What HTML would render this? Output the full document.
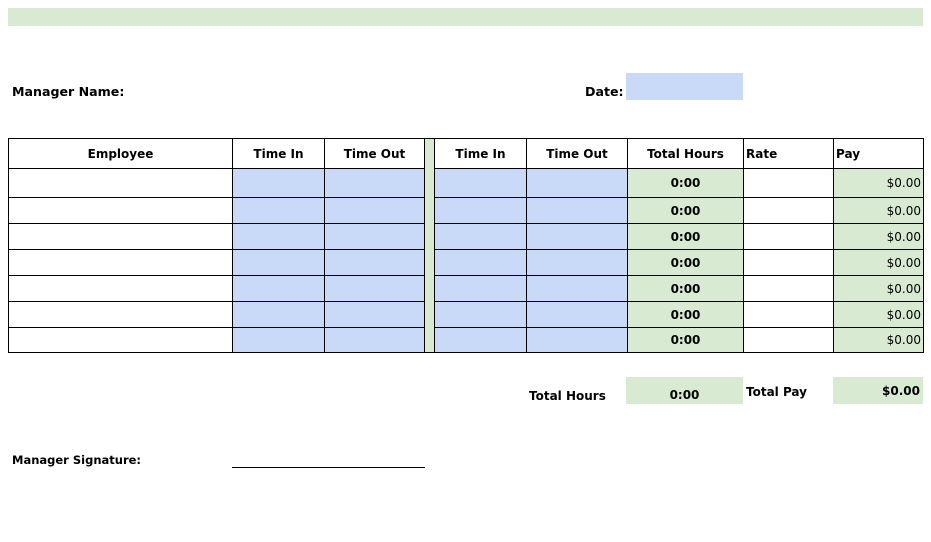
<!DOCTYPE html>
<html><head><meta charset="utf-8"><style>
body{margin:0;width:931px;height:542px;background:#fff;position:relative;font-family:"DejaVu Sans","Liberation Sans",sans-serif;font-size:12px;color:#000;overflow:hidden}
.a{position:absolute}
table{position:absolute;left:8px;top:138px;border-collapse:collapse;table-layout:fixed}
td{border:1px solid #000;padding:0;font-weight:bold;text-align:center;white-space:nowrap;overflow:hidden}
.bl{background:#c9daf8}.gr{background:#d9ead3}
td.r{text-align:right;font-weight:normal;padding-right:2px}
td.l{text-align:left;padding-left:2px}
</style></head><body>
<div class="a" style="left:8px;top:8px;width:915px;height:18px;background:#d9ead3"></div>
<div class="a" style="left:12px;top:84px;font-weight:bold;font-size:12.6px">Manager Name:</div>
<div class="a" style="left:585px;top:84px;font-weight:bold;font-size:12.6px">Date:</div>
<div class="a" style="left:626px;top:73px;width:117px;height:27px;background:#c9daf8"></div>
<table>
<colgroup><col style="width:224px"><col style="width:92px"><col style="width:100px"><col style="width:10px"><col style="width:92px"><col style="width:101px"><col style="width:116px"><col style="width:90px"><col style="width:90px"></colgroup>
<tr style="height:30px"><td>Employee</td><td>Time In</td><td>Time Out</td><td class="gr" rowspan="8"></td><td>Time In</td><td>Time Out</td><td>Total Hours</td><td class="l">Rate</td><td class="l">Pay</td></tr>
<tr style="height:29px"><td></td><td class="bl"></td><td class="bl"></td><td class="bl"></td><td class="bl"></td><td class="gr">0:00</td><td></td><td class="gr r">$0.00</td></tr>
<tr style="height:26px"><td></td><td class="bl"></td><td class="bl"></td><td class="bl"></td><td class="bl"></td><td class="gr">0:00</td><td></td><td class="gr r">$0.00</td></tr>
<tr style="height:26px"><td></td><td class="bl"></td><td class="bl"></td><td class="bl"></td><td class="bl"></td><td class="gr">0:00</td><td></td><td class="gr r">$0.00</td></tr>
<tr style="height:26px"><td></td><td class="bl"></td><td class="bl"></td><td class="bl"></td><td class="bl"></td><td class="gr">0:00</td><td></td><td class="gr r">$0.00</td></tr>
<tr style="height:26px"><td></td><td class="bl"></td><td class="bl"></td><td class="bl"></td><td class="bl"></td><td class="gr">0:00</td><td></td><td class="gr r">$0.00</td></tr>
<tr style="height:26px"><td></td><td class="bl"></td><td class="bl"></td><td class="bl"></td><td class="bl"></td><td class="gr">0:00</td><td></td><td class="gr r">$0.00</td></tr>
<tr style="height:25px"><td></td><td class="bl"></td><td class="bl"></td><td class="bl"></td><td class="bl"></td><td class="gr">0:00</td><td></td><td class="gr r">$0.00</td></tr>
</table>
<div class="a" style="left:529px;top:389px;font-weight:bold">Total Hours</div>
<div class="a" style="left:626px;top:377px;width:117px;height:27px;background:#d9ead3;text-align:center;line-height:36px;font-weight:bold">0:00</div>
<div class="a" style="left:746px;top:385px;font-weight:bold">Total Pay</div>
<div class="a" style="left:833px;top:377px;width:87px;padding-right:3px;height:27px;background:#d9ead3;text-align:right;line-height:28px;font-weight:bold">$0.00</div>
<div class="a" style="left:12px;top:453px;font-weight:bold;font-size:11.5px">Manager Signature:</div>
<div class="a" style="left:232px;top:467px;width:193px;height:1px;background:#000"></div>
</body></html>
